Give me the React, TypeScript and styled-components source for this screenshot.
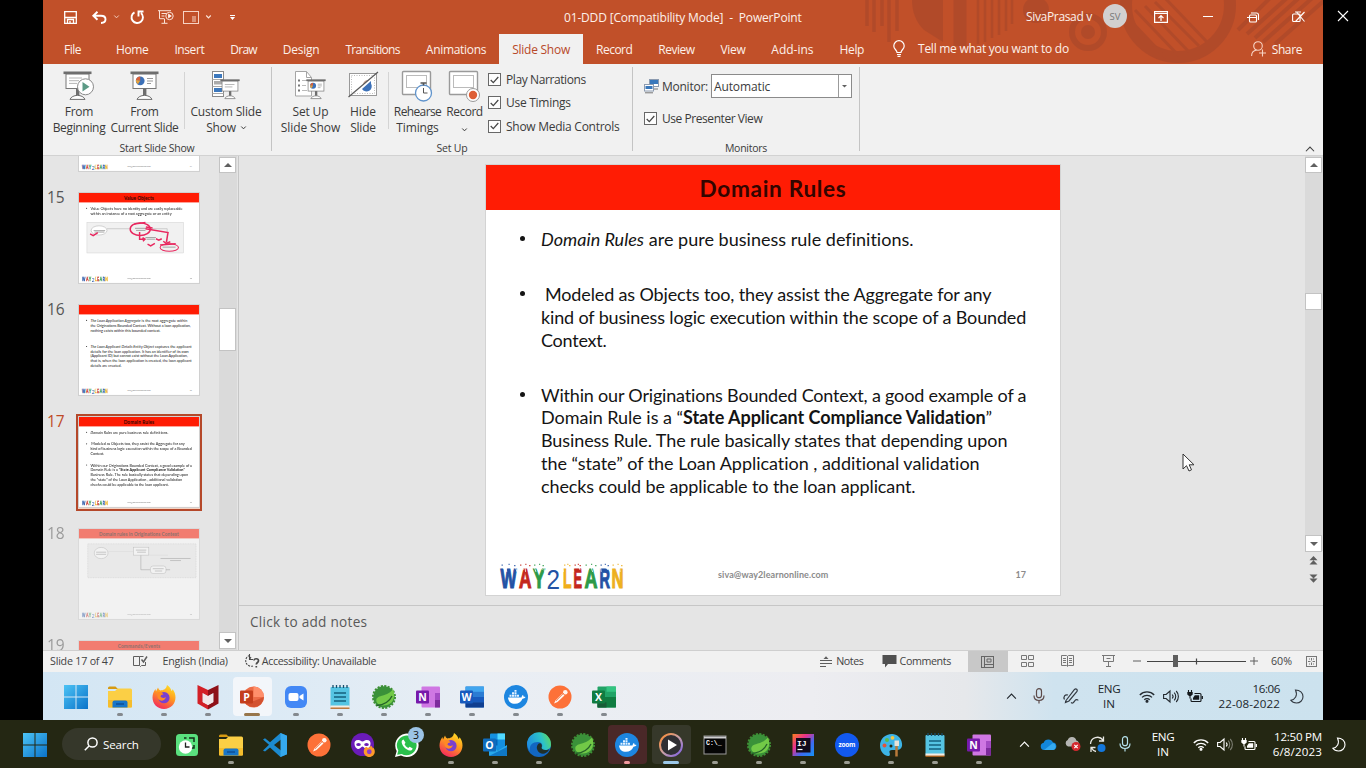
import React, { useLayoutEffect, useRef } from 'react';
import styled, { createGlobalStyle, css } from 'styled-components';

const ui = `'Open Sans', 'Noto Sans', sans-serif`;
const slideFont = `Lato, 'Open Sans', sans-serif`;

const Global = createGlobalStyle`
  * { box-sizing: border-box; }
  body { margin: 0; background: #000; font-family: ${ui}; }
  svg { display: block; flex: none; overflow: visible; }
`;

/* ---------- text with a fixed advance width ---------- */

const Tracked = styled.span`
  display: inline-block;
  white-space: pre;
  flex: none;
`;

function Fit({ w, children }: { w: number; children: React.ReactNode }) {
  const ref = useRef<HTMLSpanElement>(null);
  useLayoutEffect(() => {
    const el = ref.current;
    if (!el) return;
    el.style.letterSpacing = '0px';
    const n = (el.textContent || '').length;
    el.style.letterSpacing = `${(w - el.offsetWidth) / n}px`;
  }, [w]);
  return <Tracked ref={ref}>{children}</Tracked>;
}

/* ---------- shell ---------- */

const Desktop = styled.div`
  width: 1366px;
  height: 768px;
  background: #000;
  display: flex;
  flex-direction: column;
  overflow: hidden;
`;
const Screen = styled.div`
  display: flex;
  height: 720px;
  padding-left: 43px;
`;
const Win = styled.div`
  width: 1280px;
  height: 720px;
  display: flex;
  flex-direction: column;
  background: #e5e5e5;
`;
const OuterEdge = styled.div`
  width: 43px;
  padding: 10px 0 0 14px;
`;
const Slot = styled.div<{ $w: number }>`
  width: ${p => p.$w}px;
  height: 100%;
  flex: none;
  display: flex;
  align-items: center;
  justify-content: center;
`;
const Spacer = styled.div`
  flex: 1;
`;

/* ---------- header ---------- */

const Header = styled.header`
  position: relative;
  height: 64px;
  flex: none;
  background: #c15029;
  color: #fdf0ea;
  font-size: 12px;
`;
const Pattern = styled.svg`
  position: absolute;
  right: 0;
  top: 0;
`;
const TitleRow = styled.div`
  position: relative;
  display: flex;
  height: 34px;
  align-items: center;
  padding-left: 14px;
`;
const TabRow = styled.nav`
  position: relative;
  display: flex;
  height: 30px;
  padding-left: 8px;
`;
const Tab = styled.div<{ $active?: boolean; $first?: boolean }>`
  display: flex;
  align-items: center;
  height: 30px;
  padding: 0 13px;
  ${p => p.$first && css`margin-right: 9px;`}
  ${p => p.$active && css`background: #f1f1f1; color: #b8492a;`}
`;
const TellMe = styled.div`
  display: flex;
  align-items: center;
  gap: 13px;
  padding: 0 0 1px 16px;
`;
const Share = styled.div`
  display: flex;
  align-items: center;
  gap: 6px;
  padding: 0 21px 0 0;
`;
const Avatar = styled.div`
  width: 24px;
  height: 24px;
  margin-top: -2px;
  border-radius: 50%;
  background: #d2d0d0;
  color: #777;
  font-size: 9.5px;
  display: flex;
  align-items: center;
  justify-content: center;
`;
const UserName = styled.div`
  margin: -2px 0 0 224px;
`;
const TitleText = styled.div`
  padding-top: 1px;
  width: 238px;
`;

/* ---------- ribbon ---------- */

const Ribbon = styled.section`
  display: flex;
  height: 92px;
  flex: none;
  background: #f1f1f1;
  border-bottom: 1px solid #d2d2d2;
  font-size: 12px;
  color: #3b3b3b;
`;
const Group = styled.div<{ $w: number }>`
  width: ${p => p.$w}px;
  margin: 3px 0 4px;
  border-right: 1px solid #c4c4c4;
  display: flex;
  flex-direction: column;
`;
const GroupBody = styled.div<{ $pad: number }>`
  display: flex;
  height: 72px;
  padding-left: ${p => p.$pad}px;
`;
const GroupLabel = styled.div`
  font-size: 10.5px;
  line-height: 14px;
  height: 12px;
  text-align: center;
  padding-top: 2px;
`;
const BigButton = styled.div<{ $w: number }>`
  width: ${p => p.$w}px;
  flex: none;
  display: flex;
  flex-direction: column;
  align-items: center;
  padding-top: 4px;
`;
const BigLabel = styled.div<{ $tight?: boolean }>`
  display: flex;
  flex-direction: column;
  align-items: center;
  line-height: 16px;
  margin-top: ${p => (p.$tight ? 2 : 3)}px;
`;
const Inline = styled.div`
  display: flex;
  align-items: center;
  gap: 5px;
`;
const Rule = styled.div<{ $l: number }>`
  width: 1px;
  height: 57px;
  margin: 5px 0 0 ${p => p.$l}px;
  background: #d4d4d4;
`;
const Checks = styled.div`
  display: flex;
  flex-direction: column;
  margin-left: 5px;
  padding-top: 1px;
`;
const CheckRow = styled.div`
  display: flex;
  align-items: center;
  gap: 5px;
  height: 23.3px;
  flex: none;
`;
const Box = styled.div`
  width: 13px;
  height: 13px;
  border: 1px solid #686868;
  background: #fdfdfd;
  display: flex;
  align-items: center;
  justify-content: center;
`;
const MonitorPane = styled.div`
  display: flex;
  flex-direction: column;
  padding-top: 7px;
`;
const MonitorRow = styled.div`
  display: flex;
  align-items: center;
  height: 24px;
  margin-bottom: 9px;
  gap: 3px;
`;
const Combo = styled.div`
  display: flex;
  width: 141px;
  height: 24px;
  border: 1px solid #8b8b8b;
  background: #fff;
  padding-left: 2px;
  align-items: center;
  justify-content: space-between;
`;
const ComboArrow = styled.div`
  width: 13px;
  height: 100%;
  border-left: 1px solid #9b9b9b;
  display: flex;
  align-items: center;
  justify-content: center;
`;
const Collapse = styled.div`
  margin-left: auto;
  align-self: flex-end;
  padding: 0 8px 3px 0;
`;

/* ---------- workspace ---------- */

const Work = styled.main`
  display: flex;
  height: 494px;
  flex: none;
`;
const Side = styled.aside`
  width: 196px;
  display: flex;
  border-right: 1px solid #c6c6c6;
`;
const ThumbList = styled.div`
  width: 176px;
  height: 494px;
  overflow: hidden;
`;
const ThumbShift = styled.div`
  margin-top: -75px;
`;
const ThumbRow = styled.div<{ $dim?: boolean }>`
  display: flex;
  height: 112px;
  padding-left: 4px;
  opacity: ${p => (p.$dim ? 0.52 : 1)};
`;
const Num = styled.div<{ $on?: boolean }>`
  width: 29px;
  margin-top: -7px;
  font-size: 15.5px;
  color: ${p => (p.$on ? '#bf4a27' : '#555')};
`;
const Frame = styled.div<{ $on?: boolean }>`
  width: 126px;
  height: 97px;
  margin-top: -3px;
  padding: ${p => (p.$on ? '0' : '3px')};
  ${p => p.$on && css`border: 2px solid #b5482a; padding: 1px; background: #f4d3c4;`}
`;
const Mini = styled.div`
  width: 120px;
  height: 90px;
  overflow: hidden;
  outline: 1px solid #d0d0d0;
`;
const Shrink = styled.div`
  width: 574px;
  height: 430px;
  transform: scale(0.209);
  transform-origin: 0 0;
`;
const Bar = styled.div`
  width: 18px;
  height: 494px;
  background: #dadada;
  display: flex;
  flex-direction: column;
  align-items: flex-start;
  padding: 1px 0;
`;
const BarButton = styled.div<{ $h: number; $t?: number }>`
  width: 17px;
  height: ${p => p.$h}px;
  margin-top: ${p => p.$t || 0}px;
  background: #fff;
  border: 1px solid #c3c3c3;
  flex: none;
  display: flex;
  align-items: center;
  justify-content: center;
`;
const Editor = styled.div`
  flex: 1;
  display: flex;
  flex-direction: column;
`;
const Canvas = styled.div`
  position: relative;
  display: flex;
  height: 449px;
  padding: 9px 0 0 247px;
`;
const CanvasEnd = styled.div`
  margin: -9px 0 0 auto;
  width: 18px;
`;
const CanvasBar = styled(Bar)`
  height: 395px;
`;
const Jump = styled.div`
  width: 17px;
  height: 18px;
  display: flex;
  align-items: center;
  justify-content: center;
`;
const Notes = styled.div`
  border-top: 1px solid #c6c6c6;
  height: 45px;
  padding: 6px 0 0 11px;
  font-size: 13.6px;
  color: #595959;
`;
const Cursor = styled.svg`
  position: absolute;
  left: 943px;
  top: 297px;
`;

/* ---------- slide ---------- */

const Sheet = styled.article`
  width: 574px;
  height: 430px;
  flex: none;
  background: #fff;
  font-family: ${slideFont};
  color: #141414;
  display: flex;
  flex-direction: column;
  box-shadow: 0 0 0 1px #d3d3d3;
`;
const SheetTitle = styled.h1`
  margin: 0;
  height: 45px;
  background: #ff1c04;
  color: #330500;
  font-size: 22.6px;
  font-weight: 700;
  display: flex;
  align-items: center;
  justify-content: center;
  padding-top: 2px;
  flex: none;
`;
const SheetBody = styled.div`
  flex: 1;
  padding: 18px 0 0 55px;
  font-size: 18px;
  line-height: 22.9px;
`;
const Para = styled.div<{ $gap?: number }>`
  position: relative;
  margin-bottom: ${p => (p.$gap === undefined ? 32 : p.$gap)}px;
  &::before {
    content: '';
    position: absolute;
    left: -21px;
    top: 8px;
    width: 5px;
    height: 5px;
    border-radius: 50%;
    background: #141414;
  }
`;
const Line = styled.div<{ $in?: number }>`
  padding-left: ${p => p.$in || 0}px;
  height: 22.9px;
`;
const SheetFoot = styled.div`
  height: 38px;
  flex: none;
  display: flex;
  font-size: 9px;
  font-weight: 700;
  color: #8b8b8b;
  padding-left: 13px;
`;
const LogoBox = styled.div`
  padding-top: 6px;
`;
const FootText = styled.div<{ $l: number }>`
  padding-top: 12px;
  margin-left: ${p => p.$l}px;
`;
const Diagram = styled.svg`
  margin: 0 0 0 -17px;
`;

const logoLetters: [string, number, number, string][] = [
  ['W', 1.5, 16, '#2352a4'],
  ['A', 20, 12.5, '#c4271c'],
  ['Y', 34, 12, '#2d9a48'],
  ['L', 64, 8.5, '#f0ae1b'],
  ['E', 74.5, 8.5, '#c4271c'],
  ['A', 85.5, 13, '#2d9a48'],
  ['R', 100.5, 10.5, '#2352a4'],
  ['N', 112.5, 12, '#edb01e'],
];

const Logo = () => (
  <svg width="126" height="30" viewBox="0 0 126 30">
    {logoLetters.map(([c, x, w, col], i) => (
      <text key={i} x={x} y={24.6} fontFamily="Liberation Sans" fontWeight="700" fontSize="28.500"
        textLength={w} lengthAdjust="spacingAndGlyphs" fill={col} stroke={col} strokeWidth="1.200">{c}</text>
    ))}
    <text x="47.500" y="26" fontFamily="Liberation Sans" fontWeight="400" fontSize="27.500" textLength="13.500" lengthAdjust="spacingAndGlyphs" fill="#2352a4">2</text>
    {Array.from({ length: 40 }, (_, i) => {
      const x = i * 3.15 + 0.8;
      if (x > 46 && x < 62) return null;
      return <path key={i} d={`M${x} ${2.5 + (i % 3)} l${0.6 + (i % 2) * 0.9} ${2.4 + ((i * 7) % 3)}`} stroke="#fff" strokeWidth="0.800" />;
    })}
    {logoLetters.map(([, x, w, col], i) => (
      <path key={i} d={`M${x + 1} 2.200h1.400 M${x + w / 2} 1.400h1.200 M${x + w - 2.500} 2.600h1.500`} stroke={col} strokeWidth="1.200" opacity="0.8" />
    ))}
  </svg>
);

function Slide({ title, tw, page, children }: { title: string; tw: number; page: number; children?: React.ReactNode }) {
  return (
    <Sheet>
      <SheetTitle>{title && <Fit w={tw}>{title}</Fit>}</SheetTitle>
      <SheetBody>{children}</SheetBody>
      <SheetFoot>
        <LogoBox><Logo /></LogoBox>
        <FootText $l={93}><Fit w={110}>siva@way2learnonline.com</Fit></FootText>
        <FootText $l={187}><Fit w={10}>{String(page)}</Fit></FootText>
      </SheetFoot>
    </Sheet>
  );
}

const RulesSlide = () => (
  <Slide title="Domain Rules" tw={147} page={17}>
    <Para>
      <Line><Fit w={373}><i>Domain Rules</i> are pure business rule definitions.</Fit></Line>
    </Para>
    <Para>
      <Line $in={4}><Fit w={446}>Modeled as Objects too, they assist the Aggregate for any</Fit></Line>
      <Line><Fit w={485}>kind of business logic execution within the scope of a Bounded</Fit></Line>
      <Line><Fit w={65}>Context.</Fit></Line>
    </Para>
    <Para>
      <Line><Fit w={486}>Within our Originations Bounded Context, a good example of a</Fit></Line>
      <Line><Fit w={451}>Domain Rule is a “<b>State Applicant Compliance Validation</b>”</Fit></Line>
      <Line><Fit w={466}>Business Rule. The rule basically states that depending upon</Fit></Line>
      <Line><Fit w={440}>the “state” of the Loan Application , additional validation</Fit></Line>
      <Line><Fit w={375}>checks could be applicable to the loan applicant.</Fit></Line>
    </Para>
  </Slide>
);

const ValueSlide = () => (
  <Slide title="Value Objects" tw={142} page={15}>
    <Para $gap={32}>
      <Line><Fit w={440}>Value Objects have no identity and are easily replaceable</Fit></Line>
      <Line><Fit w={388}>within an instance of a root aggregate or an entity</Fit></Line>
    </Para>
    <Diagram width="462" height="146" viewBox="0 0 462 146" fill="none" stroke="#999" strokeWidth="2">
      <rect x="0" y="0" width="462" height="146" fill="#f1f1f1" stroke="#c9c9c9" />
      <ellipse cx="58" cy="38" rx="38" ry="22" fill="#fff" />
      <path d="M96 30h112M300 30h84v70" />
      <path d="M32 39h55M36 46h48M230 28h55M235 38h45M280 72h50M285 80h40M362 118h62" stroke="#777" strokeWidth="3" />
      <g stroke="#e8285f" strokeWidth="7">
        <ellipse cx="255" cy="32" rx="48" ry="30" />
        <path d="M225 8l55-8M15 55l15 8 22-14M282 22l32 4M280 30l108 18-8 46M365 90l14 10 20-8M252 46v34h20M266 72l12 8-10 10M290 104l15 8 20-12M330 78l14 7 14-7" />
        <ellipse cx="394" cy="120" rx="44" ry="18" strokeWidth="5" />
        <path d="M350 108l75-6" />
      </g>
    </Diagram>
  </Slide>
);

const LoanSlide = () => (
  <Slide title="" tw={0} page={16}>
    <Para $gap={56}>
      <Line><Fit w={464}><i>The Loan Application Aggregate</i> is the root aggregate within</Fit></Line>
      <Line><Fit w={480}>the Originations Bounded Context. Without a loan application,</Fit></Line>
      <Line><Fit w={335}>nothing exists within this bounded context.</Fit></Line>
    </Para>
    <Para>
      <Line><Fit w={484}><i>The Loan Applicant Details Entity Object</i> captures the applicant</Fit></Line>
      <Line><Fit w={470}>details for the loan application. It has an identifier of its own</Fit></Line>
      <Line><Fit w={465}>(Applicant ID) but cannot exist without the Loan Application,</Fit></Line>
      <Line><Fit w={484}>that is, when the loan application is created, the loan applicant</Fit></Line>
      <Line><Fit w={148}>details are created.</Fit></Line>
    </Para>
  </Slide>
);

const ContextSlide = () => (
  <Slide title="Domain rules in Originations Context" tw={382} page={18}>
    <Diagram width="522" height="172" viewBox="0 0 522 172" fill="none" stroke="#999" strokeWidth="2.500">
      <rect x="4" y="8" width="518" height="162" fill="#eeeeee" stroke="#bbb" strokeDasharray="5 3" />
      <ellipse cx="68" cy="52" rx="33" ry="27" fill="#fff" />
      <path d="M102 45h120M298 62h90" stroke="#ccc" />
      <path d="M258 62v70h45" stroke="#666" />
      <rect x="222" y="24" width="74" height="38" fill="#fff" />
      <rect x="304" y="114" width="74" height="36" rx="12" fill="#fff" />
      <path d="M44 48h48M44 58h48M234 38h50M240 48h42M352 78h144M398 88h52M315 127h52M325 138h35M378 132h20" stroke="#777" strokeWidth="3" />
    </Diagram>
  </Slide>
);

const EventsSlide = () => <Slide title="Commands/Events" tw={204} page={19} />;

const UpdateSlide = () => (
  <Slide title="Entities" tw={100} page={14}>
    <svg width="400" height="318" viewBox="0 0 400 318">
      <text x="0" y="270" fontSize="18" fontStyle="italic" fill="#e8305a" fontFamily="Lato" fontWeight="700">Updated</text>
    </svg>
  </Slide>
);

/* ---------- small glyphs ---------- */

const Chevron = ({ s = 6, c = 'currentColor', w = 1, up }: { s?: number; c?: string; w?: number; up?: boolean }) => (
  <svg width={s} height={s / 2 + 1} viewBox="0 0 6 4" fill="none" stroke={c} strokeWidth={w * 6 / s}>
    <path d={up ? 'M.3 3.5L3 .7l2.7 2.8' : 'M.3.5L3 3.3 5.7.5'} />
  </svg>
);
const Tri = ({ up, c = '#606060', s = 8 }: { up?: boolean; c?: string; s?: number }) => (
  <svg width={s} height={s / 2} viewBox="0 0 8 4"><path d={up ? 'M0 4L4 0l4 4z' : 'M0 0h8L4 4z'} fill={c} /></svg>
);
const DoubleTri = ({ up }: { up?: boolean }) => (
  <svg width="9" height="9" viewBox="0 0 9 9" fill="#5e5e5e">
    {up ? <path d="M4.5 0L8.5 4.2H.5zM4.5 4.2L8.5 8.4H.5z" /> : <path d="M.5.4h8L4.5 4.6zM.5 4.6h8L4.5 8.8z" />}
  </svg>
);
const Tick = () => (
  <svg width="9" height="8" viewBox="0 0 9 8" fill="none" stroke="#444" strokeWidth="1.2"><path d="M.7 4l2.6 2.7L8.3 1" /></svg>
);
const Check = ({ label, w }: { label: string; w: number }) => (
  <CheckRow><Box><Tick /></Box><Fit w={w}>{label}</Fit></CheckRow>
);

/* ---------- ribbon glyphs, 32 x 30 ---------- */

const Easel = ({ x = 0, y = 0, k = 1, children }: { x?: number; y?: number; k?: number; children?: React.ReactNode }) => (
  <g transform={`translate(${x} ${y}) scale(${k})`}>
    <rect x="3" y="3" width="23" height="14.5" fill="#fff" stroke="#787878" strokeWidth="1" />
    <rect x="0.5" y="0.5" width="28" height="2.6" fill="#6e6e6e" />
    {children}
    <rect x="13" y="17.5" width="3.4" height="7" fill="#6e6e6e" />
    <path d="M7 28.4c1-2.5 4-4 7.5-4s6.500 1.500 7.500 4z" fill="#fff" stroke="#6e6e6e" />
  </g>
);
const Pie = () => (
  <g>
    <circle cx="10.200" cy="9.800" r="4.400" fill="#3c71b8" />
    <path d="M10.200 9.800V5.400a4.400 4.400 0 0 0-4.300 3.600z" fill="#d9603a" />
    <path d="M10.200 9.800L5.900 9a4.400 4.400 0 0 0 2 4.300z" fill="#e8a33b" />
    <path d="M17 7.500h6M17 10h6M17 12.500h4" stroke="#999" />
  </g>
);
const BeginIcon = () => (
  <svg width="32" height="30" viewBox="0 0 32 30">
    <Easel><path d="M6 7h13M6 9.700h10M6 12.400h8" stroke="#b5b5b5" /></Easel>
    <circle cx="22.500" cy="15.800" r="8" fill="#fff" stroke="#8a8a8a" />
    <path d="M19.500 11v9.600l7-4.800z" fill="#5c9a86" />
  </svg>
);
const CurrentIcon = () => (
  <svg width="29" height="30" viewBox="0 0 29 30"><Easel><Pie /></Easel></svg>
);
const CustomIcon = () => (
  <svg width="28" height="30" viewBox="0 0 28 30">
    <rect x=".5" y=".5" width="11" height="25" fill="#fff" stroke="#8a8a8a" />
    <rect x="2" y="3" width="8" height="4" fill="#3c78bd" /><rect x="2" y="10" width="8" height="3.500" fill="#aaa" /><rect x="2" y="17" width="8" height="4" fill="#3c78bd" />
    <path d="M.5 8.500h11M.5 15.500h11M.5 22.500h11" stroke="#aaa" />
    <Easel x={8} y={8} k={0.69}><path d="M7 8h14M7 11.500h11" stroke="#999" /></Easel>
  </svg>
);
const SetupIcon = () => (
  <svg width="31" height="30" viewBox="0 0 31 30">
    <path d="M.5.500h11l5 6V25H.5z" fill="#fff" stroke="#a5a5a5" /><path d="M11.500.500v6h5" fill="none" stroke="#a5a5a5" />
    <path d="M3 9.500h2M3 14.500h2M3 19.500h2" stroke="#777" strokeWidth="2" /><path d="M7 9.500h5M7 14.500h4M7 19.500h5" stroke="#bbb" />
    <Easel x={11} y={8} k={0.69}><Pie /></Easel>
  </svg>
);
const HideIcon = () => (
  <svg width="31" height="30" viewBox="0 0 31 30">
    <rect x="1.500" y="2.500" width="27" height="22" fill="#fff" stroke="#999" />
    <rect x="3.500" y="4.500" width="23" height="18" fill="none" stroke="#bbb" strokeDasharray="1 1.500" />
    <path d="M14 18a5.200 5.200 0 0 0 9-5.500V10z" fill="#3c71b8" /><path d="M15 14l6-5a5 5 0 0 0-6 5z" fill="#c9a694" />
    <path d="M.5 26L30 1" stroke="#5a5a5a" strokeWidth="1.200" />
  </svg>
);
const Panel = () => (
  <g fill="#fff" stroke="#9a9a9a"><rect x=".5" y=".5" width="28" height="23" rx="1" strokeWidth="1.400" /><rect x="4.500" y="4.500" width="20" height="12" stroke="#bbb" /></g>
);
const RehearseIcon = () => (
  <svg width="31" height="31" viewBox="0 0 31 31">
    <Panel /><circle cx="21.500" cy="22" r="8" fill="#fff" stroke="#5f93cc" strokeWidth="1.300" />
    <path d="M18.500 12h6M21.500 12v2.500" stroke="#555" strokeWidth="1.500" /><path d="M21.500 17v5h4" fill="none" stroke="#555" />
  </svg>
);
const RecordIcon = () => (
  <svg width="31" height="31" viewBox="0 0 31 31">
    <Panel /><circle cx="24" cy="24" r="6.500" fill="#fff" stroke="#999" /><circle cx="24" cy="24" r="4.200" fill="#de5f36" />
  </svg>
);
const MonitorIcon = () => (
  <svg width="15" height="15" viewBox="0 0 15 15">
    <rect x="5.500" y=".5" width="9" height="7" fill="#fff" stroke="#8c9bb0" /><rect x="6" y="1" width="8" height="4" fill="#3a78bb" />
    <path d="M8 10h6" stroke="#777" />
    <rect x=".5" y="5.500" width="9" height="6.500" fill="#fff" stroke="#8c9bb0" /><rect x="1.500" y="7" width="7" height="3" fill="#3a78bb" /><path d="M1 13.800h8" stroke="#777" />
  </svg>
);

/* ---------- app glyphs, 24 x 24 ---------- */

const App24 = ({ s = 24, children }: { s?: number; children: React.ReactNode }) => (
  <svg width={s} height={s} viewBox="0 0 24 24">{children}</svg>
);
const Start = () => (
  <App24>
    <defs><linearGradient id="st" x1="0" y1="0" x2="1" y2="1"><stop offset="0" stopColor="#4cc3f5" /><stop offset="1" stopColor="#0a72c9" /></linearGradient></defs>
    <path d="M0 0h11.500v11.500H0zM12.500 0H24v11.500H12.500zM0 12.500h11.500V24H0zM12.500 12.500H24V24H12.500z" fill="url(#st)" />
  </App24>
);
const Folder = () => (
  <App24>
    <path d="M0 3a1.500 1.500 0 0 1 1.500-1.500h6L10 4H0z" fill="#d69a12" />
    <path d="M0 6h7l2.500-2.500h13A1.500 1.500 0 0 1 24 5v16.500a1 1 0 0 1-1 1H1a1 1 0 0 1-1-1z" fill="#fbcf45" />
    <path d="M0 15h24v6.500a1 1 0 0 1-1 1H1a1 1 0 0 1-1-1z" fill="#f5bd2c" />
    <path d="M4.500 22.500v-5a2 2 0 0 1 2-2h11a2 2 0 0 1 2 2v5z" fill="#1876c8" /><path d="M8 19h8" stroke="#0e4f96" strokeWidth="1.500" />
  </App24>
);
const Firefox = ({ s }: { s?: number }) => (
  <App24 s={s}>
    <defs><linearGradient id="ff" x1=".8" y1="0" x2=".3" y2="1"><stop offset="0" stopColor="#ffe226" /><stop offset=".45" stopColor="#ff9a1f" /><stop offset="1" stopColor="#f3265f" /></linearGradient></defs>
    <path d="M15 0c3 2 4 4 4.500 6 .8-.6 1-1 1-2 2 2.500 3 5.500 3 8.500C23.500 19 18.500 24 12 24S.5 19 .5 12.500c0-3 1-6 3-8.500l.5 2.500L6 2.500c.5 1.500 1.300 2.700 2.500 3C11 5 14 5 15 0z" fill="url(#ff)" />
    <circle cx="12" cy="12.700" r="5.600" fill="#7a3fd0" />
    <path d="M6 7c2 0 4 0 5.500 2.500-2 0-2.800.8-3 2 1.500 2 4 1.500 5.500.5-1 4-6 5-8 1.500C5.300 11.500 5.300 9 6 7z" fill="#ff8a24" />
  </App24>
);
const McAfee = () => (
  <App24>
    <path d="M1.500 0L12 5v6L6.500 8v9L12 20v4.500l-10.500-6z" fill="#d32027" /><path d="M22.500 0L12 5v6l5.500-3v9L12 20v4.500l10.500-6z" fill="#8f1118" />
    <path d="M7 8.500l5 2.800 5-2.800v8.700L12 20l-5-2.800z" fill="#f2e8ea" />
  </App24>
);
const Tile = ({ c, l, x = 0 }: { c: string; l: string; x?: number }) => (
  <g><rect x={x} y="5.500" width="13" height="13" rx="1" fill={c} />
    <text x={x + 6.500} y="15.700" fontSize="10.500" fontWeight="700" fontFamily="Open Sans" fill="#fff" textAnchor="middle">{l}</text></g>
);
const PowerPoint = () => (
  <App24><circle cx="13.500" cy="12" r="10.500" fill="#ed6c47" /><path d="M13.500 1.500A10.500 10.500 0 0 1 24 12H13.500z" fill="#ff8f6b" /><path d="M24 12a10.500 10.500 0 0 1-20 4h10z" fill="#d35230" /><Tile c="#c43e1c" l="P" /></App24>
);
const ZoomCam = () => (
  <App24><rect x="1" y="1" width="22" height="22" rx="6" fill="#4388f5" /><rect x="4.500" y="8" width="10" height="8" rx="2" fill="#fff" /><path d="M15.500 11l4-2.500v7l-4-2.500z" fill="#fff" /></App24>
);
const Notepad = () => (
  <App24><rect x="2.500" y="2" width="19" height="20" rx="1" fill="#55c4e3" /><path d="M2.500 20.500h19V23h-19z" fill="#f4ede4" /><path d="M2.500 23.200h19" stroke="#b5651f" strokeWidth="1.300" />
    <path d="M5 0v3M8.500 0v3M12 0v3M15.500 0v3M19 0v3" stroke="#174e6b" strokeWidth="1.300" /><path d="M6 8h12M6 12h12M6 16h12" stroke="#15607f" strokeWidth="1.600" /></App24>
);
const Spring = () => (
  <App24>
    <circle cx="12" cy="12" r="11" fill="none" stroke="#3f8f34" strokeWidth="2" strokeDasharray="2.100 1.350" /><circle cx="12" cy="12" r="10.700" fill="#3a9139" />
    <path d="M21 4c3 8 .5 16-9 16.500C7 20.800 4 18 4.300 15 5 9.500 16 12 21 4z" fill="#72c947" /><path d="M4.500 20.500C11 20 17 17.500 20 11" stroke="#25632a" strokeWidth="1.300" fill="none" />
  </App24>
);
const OneNote = () => (
  <App24><rect x="5.500" y="1.500" width="18.500" height="21" rx="1" fill="#cf77e3" /><path d="M19 8h5v7h-5z" fill="#a44bc4" /><path d="M19 15h5v7.500h-5z" fill="#7d2a9c" /><Tile c="#7719aa" l="N" /></App24>
);
const Word = () => (
  <App24><rect x="5.500" y="1.500" width="18.500" height="21" rx="1" fill="#2b7cd3" /><path d="M5.500 1.500H24v5.300H5.500z" fill="#41a5ee" /><path d="M5.500 12H24v5.300H5.500z" fill="#185abd" /><path d="M5.500 17.300H24v5.200H5.500z" fill="#103f91" /><Tile c="#185abd" l="W" /></App24>
);
const Excel = () => (
  <App24><rect x="5.500" y="1.500" width="18.500" height="21" rx="1" fill="#21a366" /><path d="M5.500 12H24v10.500H5.500z" fill="#107c41" /><path d="M14.500 1.500H24v5.300h-9.500z" fill="#33c481" /><path d="M5.500 17.300h9v5.200h-9z" fill="#185c37" /><Tile c="#107c41" l="X" /></App24>
);
const Docker = () => (
  <App24><circle cx="12" cy="12" r="12" fill="#1d86e0" />
    <path d="M4 12.500h13.500c.2-1.300.7-2 1.200-2.500.8.500 1 1.200 1.100 1.900.7-.1 1.300 0 1.700.2-.5 1.200-1.700 1.700-3 1.700-1.500 3.500-4 5-7.500 5-4 0-6.500-2-7-6.300z" fill="#fff" />
    <path d="M5.500 9.700h2v2h-2zM8 9.700h2v2H8zM10.500 9.700h2v2h-2zM13 9.700h2v2h-2zM8 7.200h2v2H8zM10.500 7.200h2v2h-2zM10.500 5h2v1.700h-2z" fill="#e5f2ff" /></App24>
);
const Postman = () => (
  <App24><circle cx="12" cy="12" r="11.500" fill="#fd7138" /><path d="M6 18.500l1.500-3 7-7 2 2-7 6.500z" fill="#fff4ee" /><circle cx="17.300" cy="7.200" r="2.300" fill="#fff4ee" /><path d="M8 16l8-8" stroke="#e35a24" strokeWidth=".6" /></App24>
);
const Clock = () => (
  <App24><rect x="1" y="1" width="22" height="22" rx="3.500" fill="#5ae07e" /><path d="M9 5h2.500M14 5h5v4M19 12v3h-3" fill="none" stroke="#152b1a" strokeWidth="1.500" /><circle cx="10.500" cy="14" r="6.700" fill="#fff" /><path d="M10.500 9.500V14h4" fill="none" stroke="#222" strokeWidth="1.300" /></App24>
);
const VSCode = () => (
  <App24><path d="M17.500 0L24 2.800v18.400L17.500 24 7 14.500l-5 4L0 17.500l6-5.700L0 6.500l2-1.200 5 4zM18 6.500L11 12l7 5.500z" fill="#1c8ad0" fillRule="evenodd" /><path d="M17.500 0L24 2.800v18.400L17.500 24z" fill="#35a9ee" /></App24>
);
const Mask = () => (
  <App24><circle cx="11.500" cy="11.500" r="11.500" fill="#6a1bb8" /><path d="M3.500 10.500c0-3 2-3.500 4-3.500s2.500 1.500 4 1.500S13.500 7 15.500 7s4 .5 4 3.500-2 5.500-4 5.500-2.500-2.500-4-2.500S9.500 16 7.500 16s-4-2.500-4-5.500z" fill="#fff" /><ellipse cx="7.500" cy="11.500" rx="2.300" ry="1.600" fill="#6a1bb8" /><ellipse cx="15.500" cy="11.500" rx="2.300" ry="1.600" fill="#6a1bb8" />
    <g transform="translate(12.500 12.500) scale(.48)"><path d="M15 0c3 2 4 4 4.500 6l1-2c2 2.500 3 5.500 3 8.500C23.500 19 18.500 24 12 24S.5 19 .5 12.500c0-3 1-6 3-8.500l2.500-1.500C8 6 14 5 15 0z" fill="#ff9a2a" /><circle cx="12" cy="13" r="5" fill="#8d3fcb" /></g></App24>
);
const WhatsApp = () => (
  <App24><path d="M0 24l1.700-6A11.700 11.700 0 1 1 6 22.400z" fill="#fff" /><path d="M2.200 21.800l1.100-4.200a9.900 9.900 0 1 1 3.400 3.300z" fill="#2bc04c" />
    <path d="M8.500 6.500c-1.300.3-2 1.500-1.800 3 .5 3.500 4.500 7.500 8 8 1.500.2 2.700-.7 3-2l-3-1.700-1.500 1.200c-1.500-.7-3-2.200-3.700-3.700l1-1.500z" fill="#fff" /></App24>
);
const Outlook = () => (
  <App24><rect x="7" y="0.500" width="15" height="17" rx="1" fill="#1490df" /><path d="M14.500.500H22v6h-7.500z" fill="#50d9ff" /><path d="M7 6.500h7.500v6H7z" fill="#0364b8" /><path d="M6 12l9 5.500 9-5.500v11H7a1 1 0 0 1-1-1z" fill="#28a8ea" /><path d="M6 23l18-9v8a1 1 0 0 1-1 1z" fill="#0f78c6" /><Tile c="#0f6cbd" l="O" /></App24>
);
const Edge = () => (
  <App24>
    <defs><linearGradient id="eg" x1="0" y1=".5" x2="1" y2="0.200"><stop offset="0" stopColor="#1f8fe0" /><stop offset=".6" stopColor="#2cc3c8" /><stop offset="1" stopColor="#62d957" /></linearGradient></defs>
    <circle cx="12" cy="12" r="12" fill="#1267c2" />
    <path d="M0 11A12 12 0 0 1 24 11.500c0 4-3 5.500-6 5.500s-3.500-1.500-3.500-2.200c1.500-1.800 1-5.800-3.500-5.800C5.500 9 2 12 3 18A12 12 0 0 1 0 11z" fill="url(#eg)" />
    <path d="M14.500 14.800c0 1.200 2 2.700 5.500 2.200l2.300-.8c-1.300 2.800-4 4.500-6.300 4.500-5 0-8-6-5-9.500 2-2.300 5 .5 3.500 3.600z" fill="#24270f" opacity=".85" />
  </App24>
);
const Player = () => (
  <App24>
    <defs><linearGradient id="pl" x1="0" y1="0" x2="1" y2="1"><stop offset="0" stopColor="#ff8a2a" /><stop offset=".5" stopColor="#c8a0a8" /><stop offset="1" stopColor="#7b5ce8" /></linearGradient></defs>
    <circle cx="12" cy="12" r="11" fill="#2f2f33" stroke="url(#pl)" strokeWidth="2" /><path d="M9 6.500v11l9-5.500z" fill="#fff" />
  </App24>
);
const Terminal = () => (
  <App24><rect x="1" y="3" width="22" height="18" fill="#050505" stroke="#9a9a9a" /><path d="M1 4.500h22" stroke="#d0d0d0" strokeWidth="2" /><text x="3" y="12" fontSize="6.500" fontWeight="700" fontFamily="Liberation Mono" fill="#fff">C:\_</text></App24>
);
const IntelliJ = () => (
  <App24>
    <defs><linearGradient id="ij" x1="0" y1="0" x2="1" y2="1"><stop offset="0" stopColor="#fc801d" /><stop offset=".35" stopColor="#e8308c" /><stop offset=".65" stopColor="#3f6af0" /><stop offset="1" stopColor="#1592f5" /></linearGradient></defs>
    <rect x="1.500" y="1" width="21.500" height="22" fill="url(#ij)" /><rect x="5" y="5" width="14.500" height="14.500" fill="#120b1c" /><text x="6" y="12.500" fontSize="8" fontWeight="700" fontFamily="Liberation Mono" fill="#fff">IJ</text><path d="M6.500 16.500h5" stroke="#fff" strokeWidth="1.200" />
  </App24>
);
const ZoomRound = () => (
  <App24><circle cx="12" cy="12" r="12" fill="#1259f0" /><text x="12" y="14" fontSize="6.500" fontWeight="700" textLength="17" fontFamily="Open Sans" fill="#fff" textAnchor="middle">zoom</text></App24>
);
const Paint = () => (
  <App24><path d="M13 1C6 1 1 6 1 12.500S6 23 9 23c2.500 0 2-2 1.500-3.500S11 17 13 17h5c4 0 5.500-3 5-6.500C22.500 5 18 1 13 1z" fill="#3db4e6" /><circle cx="5.500" cy="12.500" r="2" fill="#e2533a" /><circle cx="8" cy="7" r="2" fill="#5bb94a" /><circle cx="13.500" cy="4.800" r="1.900" fill="#f5c542" /><circle cx="12" cy="13" r="1.500" fill="#24270f" /><path d="M17.500 12v11.500" stroke="#b97a3a" strokeWidth="2.500" /><path d="M15.500 7.500h4.500V13h-4.500z" fill="#e7e2d8" /></App24>
);

/* ---------- tray glyphs ---------- */

const Mic = ({ c }: { c: string }) => (
  <svg width="12" height="16" viewBox="0 0 12 16" fill="none" stroke={c} strokeWidth="1.200"><rect x="3.500" y=".7" width="5" height="9" rx="2.500" /><path d="M1 7.500c0 3 2 5 5 5s5-2 5-5M6 12.500v3" /></svg>
);
const Wifi = ({ c }: { c: string }) => (
  <svg width="16" height="13" viewBox="0 0 16 13" fill="none" stroke={c} strokeWidth="1.300"><path d="M.8 5a10 10 0 0 1 14.400 0M3 7.400a7 7 0 0 1 10 0M5.300 9.700a3.800 3.800 0 0 1 5.400 0" /><circle cx="8" cy="11.300" r=".9" fill={c} /></svg>
);
const Sound = ({ c, o = 1 }: { c: string; o?: number }) => (
  <svg width="16" height="13" viewBox="0 0 16 13" fill="none" stroke={c} strokeWidth="1.100"><path d="M.6 4.500v4h2.500L7 12V1L3.100 4.500z" /><path d="M9.200 4.500a3 3 0 0 1 0 4" /><path opacity={o} d="M11.200 2.700a5.500 5.500 0 0 1 0 7.600M13.200 1a8 8 0 0 1 0 11" /></svg>
);
const Battery = ({ c }: { c: string }) => (
  <svg width="16" height="13" viewBox="0 0 16 13"><path d="M7.500 3.500H13a1 1 0 0 1 1 1v6a1 1 0 0 1-1 1H5a1 1 0 0 1-1-1V8.500" fill="none" stroke={c} strokeWidth="1.100" /><path d="M6 9.800V8l1.800-2.700h4.400v4.500z" fill={c} /><path d="M15.300 6v3" stroke={c} strokeWidth="1.300" /><path d="M.3 2h5.400v2.500L4 6H2L.3 4.500z" fill={c} /><path d="M1.500 0v2.500M4.500 0v2.500M3 5.500v3" stroke={c} strokeWidth="1.100" /></svg>
);
const Moon = ({ c }: { c: string }) => (
  <svg width="14" height="15" viewBox="0 0 14 15" fill="none" stroke={c} strokeWidth="1.100"><path d="M5.500 1c4.500 0 7.500 3 7.500 6.700 0 3.700-3 6.300-6.500 6.300-2.500 0-4.500-1-5.700-2.700C5 10.500 8 6.500 5.500 1z" /></svg>
);

/* ---------- status bar ---------- */

const Status = styled.footer`
  display: flex;
  align-items: center;
  height: 22px;
  flex: none;
  background: #f1f1f1;
  border-top: 1px solid #cfcfcf;
  padding: 0 0 1px 7px;
  font-size: 10.7px;
  color: #444;
`;
const Push = styled.div<{ $l: number }>`
  margin-left: ${p => p.$l}px;
  display: flex;
  align-items: center;
`;
const ActiveView = styled(Slot)`
  height: 21px;
  margin-bottom: -1px;
  background: #c8c8c8;
  margin-left: 17px;
`;

/* ---------- taskbars ---------- */

const InnerBar = styled.div`
  height: 48px;
  display: flex;
  background: linear-gradient(90deg, #d3e6f4 0, #dceaf5 18%, #e9eef4 34%, #ededf1 60%, #e6e8eb 72%, #cfe3ef 79%, #cce2ee 100%);
  padding-left: 11px;
  color: #20262c;
  font-size: 11.6px;
`;
const OuterBar = styled.div`
  height: 48px;
  display: flex;
  background: #242713;
  color: #fff;
  font-size: 11.6px;
  padding-left: 13px;
`;
const AppSlot = styled.div<{ $bg?: string }>`
  position: relative;
  width: 44px;
  height: 48px;
  flex: none;
  display: flex;
  align-items: center;
  justify-content: center;
  padding-top: 1px;
  &::before {
    content: '';
    position: absolute;
    inset: 5px 2px 4px 3px;
    border-radius: 4px;
    background: ${p => p.$bg || 'transparent'};
  }
  svg { position: relative; }
`;
const Pip = styled.i<{ $w: number; $c: string }>`
  position: absolute;
  left: calc(50% - ${p => p.$w / 2}px);
  bottom: 4px;
  width: ${p => p.$w}px;
  height: 3px;
  border-radius: 2px;
  background: ${p => p.$c};
`;
const Badge = styled.span`
  position: absolute;
  right: 5px;
  top: 7px;
  width: 16px;
  height: 16px;
  border-radius: 50%;
  background: #9cc4e6;
  color: #111;
  font-size: 10.500px;
  line-height: 16px;
  text-align: center;
`;
const Search = styled.div`
  width: 99px;
  height: 32px;
  margin: 8px 4px 0 5px;
  border-radius: 16px;
  background: #35372a;
  display: flex;
  align-items: center;
  padding-left: 22px;
  gap: 5px;
`;
const Stack = styled.div<{ $right?: boolean; $w: number }>`
  width: ${p => p.$w}px;
  flex: none;
  display: flex;
  flex-direction: column;
  justify-content: center;
  align-items: ${p => (p.$right ? 'flex-end' : 'center')};
  line-height: 15.500px;
`;

type AppDef = { el: React.ReactNode; pip?: string; pw?: number; bg?: string; badge?: string };
const Launcher = ({ items }: { items: AppDef[] }) => (
  <>
    {items.map((a, i) => (
      <AppSlot key={i} $bg={a.bg}>
        {a.el}
        {a.pip && <Pip $w={a.pw || 6} $c={a.pip} />}
        {a.badge && <Badge>{a.badge}</Badge>}
      </AppSlot>
    ))}
  </>
);

const g = '#84898e';
const innerApps: AppDef[] = [
  { el: <Start /> }, { el: <Folder />, pip: g }, { el: <Firefox />, pip: g }, { el: <McAfee />, pip: g },
  { el: <PowerPoint />, pip: '#97754a', pw: 16, bg: '#f3f6fa' }, { el: <ZoomCam />, pip: g }, { el: <Notepad />, pip: g },
  { el: <Spring />, pip: g }, { el: <OneNote />, pip: g }, { el: <Word />, pip: g }, { el: <Docker />, pip: g },
  { el: <Postman />, pip: g }, { el: <Excel />, pip: g },
];
const d = '#9b9c92';
const outerApps: AppDef[] = [
  { el: <Clock /> }, { el: <Folder />, pip: d }, { el: <VSCode /> }, { el: <Postman /> }, { el: <Mask /> },
  { el: <WhatsApp />, badge: '3' }, { el: <Firefox />, pip: d }, { el: <Outlook />, pip: d }, { el: <Edge />, pip: d }, { el: <Spring /> },
  { el: <Docker />, pip: '#f29a9f', bg: '#4a2828' }, { el: <Player />, pip: '#9cc8e8', pw: 16, bg: '#36382a' }, { el: <Terminal />, pip: d },
  { el: <Spring />, pip: d }, { el: <IntelliJ />, pip: d }, { el: <ZoomRound />, pip: d }, { el: <Paint />, pip: d },
  { el: <Notepad />, pip: d }, { el: <OneNote />, pip: d },
];

const tabs: [string, number][] = [
  ['File', 17], ['Home', 32.5], ['Insert', 29.5], ['Draw', 27], ['Design', 36.5], ['Transitions', 54.5], ['Animations', 60],
  ['Slide Show', 57.5], ['Record', 36], ['Review', 36], ['View', 24.5], ['Add-ins', 42], ['Help', 24.5],
];

const Dark = '#5e5e5e';

export default function App() {
  return (
    <Desktop>
      <Global />
      <Screen>
        <Win>
          <Header>
            <Pattern width="463" height="64" viewBox="860 0 463 64" fill="none" stroke="#a8472a" opacity="0.62" style={{ overflow: 'hidden' }}>
              <path d="M867 0v26M874 0v32M882 0v26M889 0v42M897 0v31" strokeWidth="3.500" />
              <path d="M912 0c0 12 4 22 12 30l19 12V0z" fill="#a8472a" stroke="none" /><path d="M960 0v46" strokeWidth="13" />
              <path d="M978 0v44M985 0v42M992 0v38M999 0v35M1006 0v31M1012 0v24" strokeWidth="2.500" />
              <circle cx="1036" cy="10" r="13" fill="#a8472a" stroke="none" />
              <circle cx="1088" cy="32" r="16" strokeWidth="6" /><circle cx="1088" cy="32" r="7" fill="#a8472a" stroke="none" />
              <circle cx="1178" cy="5" r="52" strokeWidth="12" />
              <path d="M1135 10l44 46M1145 6l44 46M1155 2l44 44M1165-2l42 44M1128 18l38 40" strokeWidth="3" />
              <path d="M1247 34l40-36M1255 38l46-42M1263 42l56-50M1275 44l52-46M1238 30l32-32" strokeWidth="4" />
            </Pattern>
            <TitleRow>
              <Slot $w={27}><svg width="13" height="13" viewBox="0 0 13 13" fill="none" stroke="#fff" strokeWidth="1.300"><path d="M.7.700h11.600v11.600H.7zM.7 6.500h11.600M3.500 12V8.500h6V12M6 10v2" /></svg></Slot>
              <Slot $w={30}><svg width="15" height="13" viewBox="0 0 15 13" fill="none" stroke="#fff" strokeWidth="1.900"><path d="M5.500.7L1.300 4.800l4.200 4M1.500 4.800h7.500c6 0 6 7 0 7.200" /></svg></Slot>
              <Slot $w={5}><Chevron s={5} c="#f3cdbd" /></Slot>
              <Slot $w={36}><svg width="14" height="14" viewBox="0 0 14 14" fill="none" stroke="#fff" strokeWidth="1.900"><path d="M4.500 2.300A5.700 5.700 0 1 0 11 3M8.500 6.500V1.500h5" /></svg></Slot>
              <Slot $w={22}><svg width="16" height="14" viewBox="0 0 16 14" fill="none" stroke="#fbe3d8"><path d="M0 .700h13M1.500.700v8h5M3.500 3.500h5M3.500 6h3M6.500 9v4M3.500 13.300h6" /><circle cx="11.500" cy="6" r="3.700" /><path d="M10.500 4.200v3.600l2.800-1.800z" fill="#fff" /></svg></Slot>
              <Slot $w={28}><svg width="16" height="13" viewBox="0 0 16 13" fill="none" stroke="#f7d3c4"><rect x=".5" y=".5" width="15" height="12" /><path d="M9 6h4M9 8h4M9 10h4" /></svg></Slot>
              <Slot $w={7}><Chevron s={5} c="#fbe3d8" w={1.200} /></Slot>
              <Slot $w={41}><svg width="5" height="5" viewBox="0 0 5 5" fill="#fff"><path d="M0 0h5v1H0zM0 2h5L2.500 5z" /></svg></Slot>
              <Push $l={311}><TitleText><Fit w={238}>{'01-DDD [Compatibility Mode]  -  PowerPoint'}</Fit></TitleText></Push>
              <UserName><Fit w={66}>SivaPrasad v</Fit></UserName>
              <Push $l={11}><Avatar>SV</Avatar></Push>
              <Push $l={27}><svg width="14" height="12" viewBox="0 0 14 12" fill="none" stroke="#fff" strokeWidth="1.200"><path d="M.6.600h12.800v10.800H.6zM.6 2.500h12.800M7 10V5M4.500 7.200L7 4.700l2.500 2.500" /></svg></Push>
              <Push $l={35}><svg width="10" height="2" viewBox="0 0 10 2"><path d="M0 .500h10" stroke="#fff" /></svg></Push>
              <Push $l={34}><svg width="12" height="11" viewBox="0 0 12 11" fill="none" stroke="#fff" strokeWidth="1.100"><rect x="2.500" y="3" width="7" height="7" rx="1" /><path d="M4 1h5.500a2 2 0 0 1 2 2v5M0 5.500h9" /></svg></Push>
              <Push $l={33}><svg width="13" height="12" viewBox="0 0 13 12" fill="none" stroke="#fff" strokeWidth="1.100"><rect x=".6" y="3" width="7.500" height="7.500" rx="1" /><path d="M3 1h6M3.500 10.500L12.500 1M4.500 1l8 9.500" /></svg></Push>
            </TitleRow>
            <TabRow>
              {tabs.map(([t, w]) => (
                <Tab key={t} $active={t === 'Slide Show'} $first={t === 'File'}><Fit w={w}>{t}</Fit></Tab>
              ))}
              <TellMe>
                <svg width="12" height="17" viewBox="0 0 12 17" fill="none" stroke="#fff" strokeWidth="1.200"><path d="M4 12.500c0-2.500-3.200-3.200-3.200-6.600a5.200 5.200 0 0 1 10.400 0c0 3.400-3.200 4.100-3.200 6.600zM4 14.500h4M4.500 16.300h3" /></svg>
                <Fit w={151}>Tell me what you want to do</Fit>
              </TellMe>
              <Spacer />
              <Share>
                <svg width="15" height="16" viewBox="0 0 15 16" fill="none" stroke="#f7d3c4" strokeWidth="1.100"><circle cx="7" cy="5" r="4.300" /><path d="M.6 15c0-3.500 2-5.500 5-6M11.500 8.500v7M8 12h7" /></svg>
                <Fit w={30}>Share</Fit>
              </Share>
            </TabRow>
          </Header>

          <Ribbon>
            <Group $w={229}>
              <GroupBody $pad={4}>
                <BigButton $w={64}><BeginIcon /><BigLabel><Fit w={28}>From</Fit><Fit w={53}>Beginning</Fit></BigLabel></BigButton>
                <BigButton $w={67}><CurrentIcon /><BigLabel><Fit w={28}>From</Fit><Fit w={68}>Current Slide</Fit></BigLabel></BigButton>
                <Rule $l={6} />
                <BigButton $w={82}><CustomIcon /><BigLabel><Fit w={71}>Custom Slide</Fit><Inline><Fit w={29}>Show</Fit><Chevron s={5} /></Inline></BigLabel></BigButton>
              </GroupBody>
              <GroupLabel><Fit w={75}>Start Slide Show</Fit></GroupLabel>
            </Group>
            <Group $w={361}>
              <GroupBody $pad={7}>
                <BigButton $w={63}><SetupIcon /><BigLabel><Fit w={36}>Set Up</Fit><Fit w={59}>Slide Show</Fit></BigLabel></BigButton>
                <BigButton $w={42}><HideIcon /><BigLabel><Fit w={26}>Hide</Fit><Fit w={26}>Slide</Fit></BigLabel></BigButton>
                <Rule $l={4} />
                <BigButton $w={57}><RehearseIcon /><BigLabel $tight><Fit w={47}>Rehearse</Fit><Fit w={42}>Timings</Fit></BigLabel></BigButton>
                <BigButton $w={37}><RecordIcon /><BigLabel $tight><Fit w={36}>Record</Fit><Slot $w={10}><Chevron s={5} /></Slot></BigLabel></BigButton>
                <Checks>
                  <Check label="Play Narrations" w={80} />
                  <Check label="Use Timings" w={65} />
                  <Check label="Show Media Controls" w={114} />
                </Checks>
              </GroupBody>
              <GroupLabel><Fit w={31}>Set Up</Fit></GroupLabel>
            </Group>
            <Group $w={227}>
              <GroupBody $pad={11}>
                <MonitorPane>
                  <MonitorRow><MonitorIcon /><Fit w={46}>Monitor:</Fit><Combo><Fit w={56}>Automatic</Fit><ComboArrow><Tri s={5} /></ComboArrow></Combo></MonitorRow>
                  <Check label="Use Presenter View" w={100} />
                </MonitorPane>
              </GroupBody>
              <GroupLabel><Fit w={42}>Monitors</Fit></GroupLabel>
            </Group>
            <Collapse><Chevron s={10} up c="#444" w={1.200} /></Collapse>
          </Ribbon>

          <Work>
            <Side>
              <ThumbList>
                <ThumbShift>
                  <ThumbRow><Num>14</Num><Frame><Mini><Shrink><UpdateSlide /></Shrink></Mini></Frame></ThumbRow>
                  <ThumbRow><Num>15</Num><Frame><Mini><Shrink><ValueSlide /></Shrink></Mini></Frame></ThumbRow>
                  <ThumbRow><Num>16</Num><Frame><Mini><Shrink><LoanSlide /></Shrink></Mini></Frame></ThumbRow>
                  <ThumbRow><Num $on>17</Num><Frame $on><Mini><Shrink><RulesSlide /></Shrink></Mini></Frame></ThumbRow>
                  <ThumbRow $dim><Num>18</Num><Frame><Mini><Shrink><ContextSlide /></Shrink></Mini></Frame></ThumbRow>
                  <ThumbRow $dim><Num>19</Num><Frame><Mini><Shrink><EventsSlide /></Shrink></Mini></Frame></ThumbRow>
                </ThumbShift>
              </ThumbList>
              <Bar>
                <BarButton $h={16}><Tri up /></BarButton>
                <BarButton $h={43} $t={135} />
                <BarButton $h={17} $t={281}><Tri /></BarButton>
              </Bar>
            </Side>
            <Editor>
              <Canvas>
                <RulesSlide />
                <CanvasEnd>
                  <CanvasBar>
                    <BarButton $h={16}><Tri up /></BarButton>
                    <BarButton $h={17} $t={120} />
                    <BarButton $h={17} $t={225}><Tri /></BarButton>
                  </CanvasBar>
                  <Jump><DoubleTri up /></Jump>
                  <Jump><DoubleTri /></Jump>
                </CanvasEnd>
                <Cursor width="13" height="19" viewBox="0 0 13 19"><path d="M1 1v15l3.500-3.300L7 18l2.500-1.200-2.300-5H12z" fill="#fff" stroke="#333" /></Cursor>
              </Canvas>
              <Notes><Fit w={117}>Click to add notes</Fit></Notes>
            </Editor>
          </Work>

          <Status>
            <Fit w={64}>Slide 17 of 47</Fit>
            <Push $l={19}><svg width="15" height="12" viewBox="0 0 15 12" fill="none" stroke={Dark}><path d="M6.500 1.500H.5v9h6l1 1 1-1h4V7M6.500 1.500v9M6.500 1.500h4" /><path d="M8.500 4.500l2 2.500 3.500-5.500" strokeWidth="1.500" /></svg></Push>
            <Push $l={15}><Fit w={65}>English (India)</Fit></Push>
            <Push $l={17}><svg width="15" height="14" viewBox="0 0 15 14" fill="none" stroke="#4a4a4a" strokeWidth="1.100"><path d="M4.500 1.500A5.500 5.500 0 1 0 8 12" strokeDasharray="2 1" /><path d="M4.500 0v5.500h3.500M6 3l-1.500 2.500" /><path d="M9 6.500c0-2.500 4.500-2.300 4.500.3 0 1.700-2.200 1.700-2.200 3.700M11.300 12v1.500" strokeWidth="1.700" /></svg></Push>
            <Push $l={2}><Fit w={114}>Accessibility: Unavailable</Fit></Push>
            <Push $l={444}><svg width="12" height="11" viewBox="0 0 12 11" fill="none" stroke={Dark}><path d="M0 4.500h12M0 7.500h12M0 10.500h6" /><path d="M3.500 3L6 .3 8.500 3z" fill={Dark} stroke="none" /></svg></Push>
            <Push $l={4}><Fit w={27}>Notes</Fit></Push>
            <Push $l={18}><svg width="15" height="13" viewBox="0 0 15 13"><path d="M.5 0h14v9H6l-3 3.500V9H.5z" fill="#505050" /></svg></Push>
            <Push $l={3}><Fit w={51}>Comments</Fit></Push>
            <ActiveView $w={40}><svg width="13" height="12" viewBox="0 0 13 12" fill="none" stroke="#666"><rect x=".5" y=".5" width="12" height="11" /><path d="M3.500.500v11M3.500 8.500h9M6 3h4v3H6z" /></svg></ActiveView>
            <Slot $w={40}><svg width="13" height="12" viewBox="0 0 13 12" fill="none" stroke="#777"><path d="M.5.500h5v4h-5zM7.500.500h5v4h-5zM.5 7.500h5v4h-5zM7.500 7.500h5v4h-5z" /></svg></Slot>
            <Slot $w={40}><svg width="13" height="12" viewBox="0 0 13 12" fill="none" stroke="#777"><path d="M.5.500h5l1 .8 1-.8h5v10h-5l-1 1-1-1h-5zM6.500 1v10M2 3.500h3M2 5.500h3M2 7.500h3M8 3.500h3M8 5.500h3M8 7.500h3" /></svg></Slot>
            <Slot $w={41}><svg width="13" height="12" viewBox="0 0 13 12" fill="none" stroke="#777"><path d="M0 .500h13M1.500.500v6h10v-6M6.500 6.500v5M4 11.500h5M4.500 3.500h4" /></svg></Slot>
            <Push $l={4}><svg width="8" height="2"><path d="M0 1h8" stroke={Dark} /></svg></Push>
            <Push $l={6}><svg width="99" height="12" viewBox="0 0 99 12"><path d="M0 6.500h99M49.500 3.500v6" stroke="#444" strokeWidth="1.200" /><rect x="26" y="0" width="5" height="12" fill="#5e5e5e" /></svg></Push>
            <Push $l={4}><svg width="8" height="8"><path d="M0 4h8M4 0v8" stroke={Dark} /></svg></Push>
            <Push $l={13}><Fit w={21}>60%</Fit></Push>
            <Push $l={14}><svg width="11" height="11" viewBox="0 0 11 11" fill="none" stroke="#777"><rect x=".5" y=".5" width="10" height="10" /><path d="M5.500 2v2.500M5.500 6.500V9M2 5.500h2.500M6.500 5.500H9" /><path d="M3 3h1M7 3h1M3 8h1M7 8h1" /></svg></Push>
          </Status>

          <InnerBar>
            <Launcher items={innerApps} />
            <Spacer />
            <Slot $w={28}><Chevron s={11} up w={1.200} /></Slot>
            <Slot $w={28}><Mic c="#5c4a49" /></Slot>
            <Slot $w={36}><svg width="16" height="16" viewBox="0 0 16 16" fill="none" stroke="#333a42" strokeWidth="1.200"><path d="M3 12.500L11.500 1.500c1.500-1.500 3.500.3 2.500 2L6 13l-3.500 1.500zM5 7c-3-1-5 2-3.500 4.500M8 14.500c2 1.500 3-.5 4-2s3-1 3 0" /></svg></Slot>
            <Stack $w={40}><Fit w={23}>ENG</Fit><Fit w={12}>IN</Fit></Stack>
            <Slot $w={36}><Wifi c="#22282e" /></Slot>
            <Slot $w={12}><Sound c="#22282e" /></Slot>
            <Slot $w={36}><Battery c="#15191d" /></Slot>
            <Stack $w={67} $right><Fit w={28}>16:06</Fit><Fit w={62}>22-08-2022</Fit></Stack>
            <Slot $w={33}><Moon c="#333a42" /></Slot>
            <Slot $w={10} />
          </InnerBar>
        </Win>
        <OuterEdge>
          <svg width="12" height="12" viewBox="0 0 12 12" stroke="#fff" strokeWidth="1.100"><path d="M1 1l10 10M11 1L1 11" /></svg>
        </OuterEdge>
      </Screen>

      <OuterBar>
        <AppSlot><Start /></AppSlot>
        <Search>
          <svg width="14" height="14" viewBox="0 0 14 14" fill="none" stroke="#fff" strokeWidth="1.500"><circle cx="8.500" cy="5.500" r="4.600" /><path d="M5 9L.8 13.200" /></svg>
          <Fit w={36}>Search</Fit>
        </Search>
        <Launcher items={outerApps} />
        <Spacer />
        <Slot $w={24}><Chevron s={11} up w={1.300} /></Slot>
        <Slot $w={24}><svg width="17" height="11" viewBox="0 0 17 11"><path d="M4 11a3.700 3.700 0 0 1-.3-7.300A5 5 0 0 1 13 3.500 3.800 3.800 0 0 1 13.300 11z" fill="#1287db" /><path d="M4 11L13 4a3.700 3.700 0 0 1 .3 7z" fill="#35aaf0" /></svg></Slot>
        <Slot $w={24}><svg width="17" height="14" viewBox="0 0 17 14"><path d="M4 9.500a3.500 3.500 0 0 1-.3-6.500 4.500 4.500 0 0 1 8.600.5c2 .5 3 2 2.500 6z" fill="#b5b5b3" /><circle cx="12" cy="9.500" r="4.500" fill="#d3282f" /><path d="M10.300 7.800l3.400 3.400M13.700 7.800l-3.400 3.400" stroke="#fff" strokeWidth="1.200" /></svg></Slot>
        <Slot $w={26}><svg width="17" height="17" viewBox="0 0 17 17" fill="none" stroke="#e8e8e4" strokeWidth="1.300"><path d="M1.500 8a7 7 0 0 1 12.500-4M14.500.500V5H10M7 15.500A7 7 0 0 1 2.500 12M2 16v-4.500h4.500" /><circle cx="12.500" cy="12" r="4" fill="#1377dc" stroke="none" /></svg></Slot>
        <Slot $w={30}><Mic c="#b6e1ec" /></Slot>
        <Stack $w={46}><Fit w={23}>ENG</Fit><Fit w={12}>IN</Fit></Stack>
        <Slot $w={30}><Wifi c="#fff" /></Slot>
        <Slot $w={18}><Sound c="#fff" o={0.4} /></Slot>
        <Slot $w={30}><Battery c="#fff" /></Slot>
        <Stack $w={58} $right><Fit w={48}>12:50 PM</Fit><Fit w={49}>6/8/2023</Fit></Stack>
        <Slot $w={33}><Moon c="#fff" /></Slot>
        <Slot $w={11} />
      </OuterBar>
    </Desktop>
  );
}
